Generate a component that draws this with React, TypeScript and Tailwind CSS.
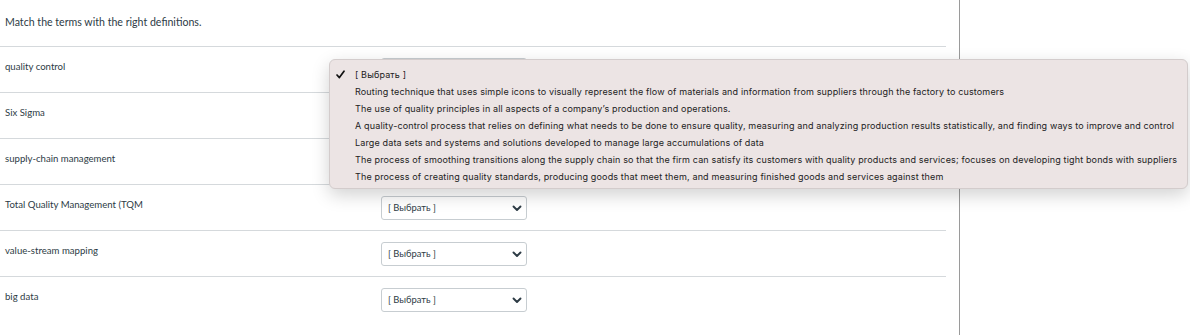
const terms = [
  "quality control",
  "Six Sigma",
  "supply-chain management",
  "Total Quality Management (TQM",
  "value-stream mapping",
  "big data",
];

const options = [
  "Routing technique that uses simple icons to visually represent the flow of materials and information from suppliers through the factory to customers",
  "The use of quality principles in all aspects of a company\u2019s production and operations.",
  "A quality-control process that relies on defining what needs to be done to ensure quality, measuring and analyzing production results statistically, and finding ways to improve and control",
  "Large data sets and systems and solutions developed to manage large accumulations of data",
  "The process of smoothing transitions along the supply chain so that the firm can satisfy its customers with quality products and services; focuses on developing tight bonds with suppliers",
  "The process of creating quality standards, producing goods that meet them, and measuring finished goods and services against them",
];

function Chevron() {
  return (
    <svg width="10" height="7" viewBox="0 0 10 7" className="text-[#2d3b45]">
      <path d="M1.5 1.5 L5 5 L8.5 1.5" fill="none" stroke="currentColor" strokeWidth="1.9" strokeLinecap="round" strokeLinejoin="round" />
    </svg>
  );
}

function Select() {
  return (
    <div className="mt-[11px] flex h-[24px] w-[146px] items-center justify-between rounded-[3px] border border-[#c7cdd1] bg-white pl-[6px] pr-[4px]">
      <span className="text-[9.4px] text-[#2d3b45]">[ Выбрать ]</span>
      <Chevron />
    </div>
  );
}

export default function App() {
  return (
    <div className="relative flex h-[335px] w-[1190px] overflow-hidden bg-white" style={{ fontFamily: "Lato, 'Noto Sans', sans-serif" }}>
      {/* question column */}
      <div className="w-[960px] border-r border-[#9a9a9a]">
        <div className="w-[946px]">
          <p className="pl-[5px] pt-[15px] pb-[17px] text-[10.6px] leading-[14px] text-[#2d3b45]">
            Match the terms with the right definitions.
          </p>
          {terms.map((t) => (
            <div key={t} className="flex h-[46px] border-t border-[#d5d9dc]">
              <div className="w-[381px] pl-[5px] pt-[14px] text-[9.6px] leading-[12px] text-[#2d3b45]">{t}</div>
              <Select />
            </div>
          ))}
        </div>
      </div>

      {/* open select menu */}
      <div
        className="absolute left-[329px] top-[59px] w-[859px] rounded-[6px] border border-[#d3cccc] bg-[#ece4e4] pt-[6px] pb-[3px] shadow-[0_6px_18px_rgba(0,0,0,0.18)]"
        style={{ fontFamily: "Inter, 'Liberation Sans', Arial, sans-serif" }}
      >
        <div className="flex h-[17px] items-center text-[9px] tracking-[0.15px] text-[#222]">
          <span className="flex w-[25px] justify-start pl-[6px]">
            <svg width="9" height="9" viewBox="0 0 9 9">
              <path d="M1 5 L3.4 7.6 L8 1.2" fill="none" stroke="#111" strokeWidth="1.7" strokeLinecap="round" strokeLinejoin="round" />
            </svg>
          </span>
          <span>[ Выбрать ]</span>
        </div>
        {options.map((o) => (
          <div key={o} className="flex h-[17px] items-center whitespace-nowrap pl-[25px] text-[9px] tracking-[0.15px] text-[#222]">
            {o}
          </div>
        ))}
      </div>
    </div>
  );
}
